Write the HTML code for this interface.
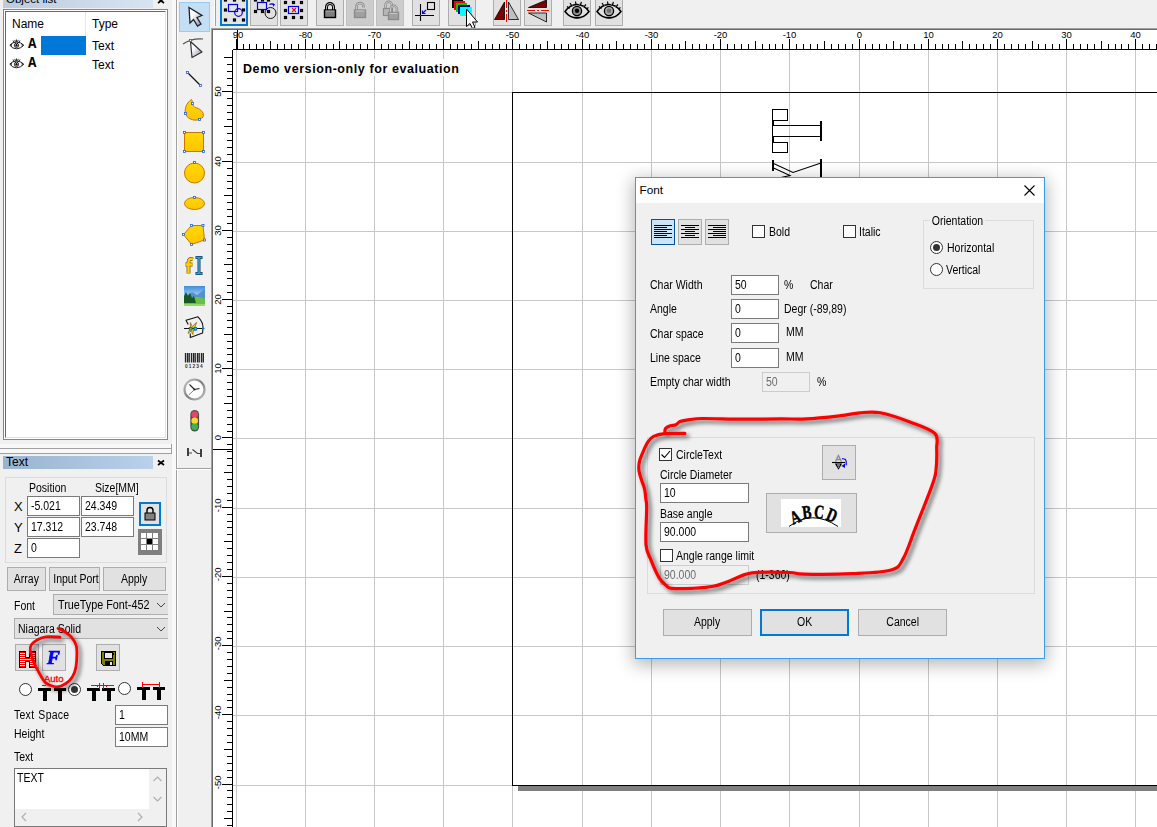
<!DOCTYPE html>
<html><head><meta charset="utf-8"><title>Font</title>
<style>
*{box-sizing:border-box;margin:0;padding:0}
html,body{width:1157px;height:827px;overflow:hidden;background:#f0f0f0;font-family:"Liberation Sans",sans-serif;font-size:11px;color:#000}
.a{position:absolute}
.t{position:absolute;white-space:nowrap;line-height:14px}
.inp{position:absolute;background:#fff;border:1px solid #7a7a7a;line-height:14px;padding:2px 0 0 3px;white-space:nowrap;overflow:hidden}
.inp.dis{background:#f0f0f0;border-color:#cccccc;color:#6d6d6d}
.btn{position:absolute;background:#e1e1e1;border:1px solid #adadad;text-align:center;white-space:nowrap}
.cb{position:absolute;width:13px;height:13px;background:#fff;border:1px solid #333}
.rb{position:absolute;width:13px;height:13px;background:#fff;border:1px solid #333;border-radius:50%}
.n{font-size:12px;transform:scaleX(.875);transform-origin:0 50%}
span.n{display:inline-block}
span.n.c{transform-origin:50% 50%}
.tb{position:absolute;top:-5px;height:31px;width:28px;background:#e1e1e1;border:1px solid #adadad}
</style></head><body>
<!-- LEFT PANEL: object list -->
<div class="a" style="left:3px;top:-6px;width:150px;height:14px;background:linear-gradient(90deg,#bccbdd,#d7e4f2)"></div>
<div class="t" style="left:6px;top:-8px;font-size:11.500px;color:#000">Object list</div>
<svg class="a" style="left:157px;top:-3px" width="8" height="8"><path d="M1 1.500l6 4.500m0-4.500l-6 4.500" stroke="#000" stroke-width="1.600" fill="none"/></svg>
<div class="a" style="left:3px;top:9px;width:165px;height:431px;border:1px solid #828790;background:#fff"></div>
<div class="a" style="left:5px;top:11px;width:161px;height:427px;border:1px solid #696969;border-right-color:#e3e3e3;border-bottom-color:#e3e3e3;background:#fff"></div>
<div class="a" style="left:85px;top:12px;width:1px;height:24px;background:#e5e5e5"></div>
<div class="t" style="left:12px;top:17px;font-size:12px">Name</div>
<div class="t" style="left:92px;top:17px;font-size:12px">Type</div>
<div class="a" style="left:41px;top:36px;width:45px;height:19px;background:#0078d7"></div>
<div class="t" style="left:92px;top:39px;font-size:12px">Text</div>
<div class="t" style="left:92px;top:58px;font-size:12px">Text</div>
<div class="t" style="left:28px;top:36px;font-size:14px;line-height:16px;font-weight:bold;font-family:'Liberation Mono',monospace">A</div>
<div class="t" style="left:28px;top:55px;font-size:14px;line-height:16px;font-weight:bold;font-family:'Liberation Mono',monospace">A</div>
<svg class="a" style="left:9px;top:39px" width="16" height="11" viewBox="0 0 16 11"><g fill="none" stroke="#000" stroke-width=".9"><path d="M.8 6.200Q3.500 3 7.500 3Q11.500 3 14.800 6.200Q11.500 9.800 7.500 9.800Q3.500 9.800 .8 6.200Z"/><path d="M2.500 7.500Q1.500 6 3 4.500M13 7.500Q14 6 12.500 4.500" stroke-width=".7"/><circle cx="7.500" cy="6.300" r="2.100"/><circle cx="7.500" cy="6.300" r=".8" fill="#000"/><path d="M4 1.500l1 1.800M7.500 .5v2.300M11 1.500l-1 1.800M5.800 .9l.6 2M9.200 .9l-.6 2" stroke-width=".8"/></g></svg>
<svg class="a" style="left:9px;top:58px" width="16" height="11" viewBox="0 0 16 11"><g fill="none" stroke="#000" stroke-width=".9"><path d="M.8 6.200Q3.500 3 7.500 3Q11.500 3 14.800 6.200Q11.500 9.800 7.500 9.800Q3.500 9.800 .8 6.200Z"/><path d="M2.500 7.500Q1.500 6 3 4.500M13 7.500Q14 6 12.500 4.500" stroke-width=".7"/><circle cx="7.500" cy="6.300" r="2.100"/><circle cx="7.500" cy="6.300" r=".8" fill="#000"/><path d="M4 1.500l1 1.800M7.500 .5v2.300M11 1.500l-1 1.800M5.800 .9l.6 2M9.200 .9l-.6 2" stroke-width=".8"/></g></svg>
<!-- splitter lines -->
<div class="a" style="left:0;top:444px;width:171px;height:4px;background:#f8f8f8"></div>
<div class="a" style="left:0;top:449px;width:171px;height:4px;background:#f8f8f8"></div>
<div class="a" style="left:0;top:448px;width:176px;height:1px;background:#a0a0a0"></div>
<div class="a" style="left:171px;top:444px;width:1px;height:10px;background:#a0a0a0"></div>
<div class="a" style="left:0;top:453px;width:172px;height:1px;background:#a0a0a0"></div>
<!-- Text panel -->
<div class="a" style="left:3px;top:456px;width:150px;height:13px;background:linear-gradient(90deg,#99b4d1,#b9d1ea)"></div>
<div class="t" style="left:6px;top:455px;font-size:12px">Text</div>
<svg class="a" style="left:157px;top:459px" width="8" height="8"><path d="M1 1.500l6 4.500m0-4.500l-6 4.500" stroke="#000" stroke-width="1.600" fill="none"/></svg>
<div class="a" style="left:5px;top:477px;width:162px;height:86px;border:1px solid #dcdcdc"></div>
<div class="t n" style="left:29px;top:481px">Position</div>
<div class="t n" style="left:95px;top:481px">Size[MM]</div>
<div class="t" style="left:14px;top:500px;font-size:13px">X</div>
<div class="t" style="left:14px;top:521px;font-size:13px">Y</div>
<div class="t" style="left:14px;top:542px;font-size:13px">Z</div>
<div class="inp" style="left:27px;top:496px;width:53px;height:20px"><span class="n">-5.021</span></div>
<div class="inp" style="left:81px;top:496px;width:53px;height:20px"><span class="n">24.349</span></div>
<div class="inp" style="left:27px;top:517px;width:53px;height:20px"><span class="n">17.312</span></div>
<div class="inp" style="left:81px;top:517px;width:53px;height:20px"><span class="n">23.748</span></div>
<div class="inp" style="left:27px;top:538px;width:53px;height:20px"><span class="n">0</span></div>
<div class="a" style="left:139px;top:502px;width:22px;height:24px;background:#e1e1e1;border:2px solid #0078d7"></div>
<svg class="a" style="left:144px;top:506px" width="12" height="15" viewBox="0 0 12 15"><path d="M3 7V4.5a3 3 0 0 1 6 0V7" fill="none" stroke="#000" stroke-width="1.4"/><rect x="1" y="7" width="10" height="7" fill="#808080" stroke="#000"/></svg>
<div class="a" style="left:138px;top:529px;width:24px;height:26px;background:#808080"></div>
<svg class="a" style="left:138px;top:529px" width="24" height="26"><g fill="#fff"><rect x="3" y="4" width="5" height="5"/><rect x="9" y="4" width="5" height="5"/><rect x="15" y="4" width="5" height="5"/><rect x="3" y="10" width="5" height="5"/><rect x="15" y="10" width="5" height="5"/><rect x="3" y="16" width="5" height="5"/><rect x="9" y="16" width="5" height="5"/><rect x="15" y="16" width="5" height="5"/></g><rect x="9" y="10" width="5" height="5" fill="#000"/></svg>
<div class="btn" style="left:7px;top:567px;width:39px;height:24px;line-height:23px"><span class="n c">Array</span></div>
<div class="btn" style="left:49px;top:567px;width:51px;height:24px;line-height:23px"><span class="n c">Input Port</span></div>
<div class="btn" style="left:103px;top:567px;width:63px;height:24px;line-height:23px"><span class="n c">Apply</span></div>
<div class="t n" style="left:14px;top:599px">Font</div>
<div class="a" style="left:53px;top:594px;width:115px;height:21px;background:#e1e1e1;border:1px solid #adadad;border-right:none"></div>
<div class="t n" style="left:58px;top:598px;transform:scaleX(.9)">TrueType Font-452</div>
<svg class="a" style="left:156px;top:602px" width="10" height="6"><path d="M1 1l4 4 4-4" fill="none" stroke="#444" stroke-width="1"/></svg>
<div class="a" style="left:14px;top:618px;width:154px;height:21px;background:#e1e1e1;border:1px solid #adadad;border-right:none"></div>
<div class="t n" style="left:18px;top:622px">Niagara Solid</div>
<svg class="a" style="left:156px;top:626px" width="10" height="6"><path d="M1 1l4 4 4-4" fill="none" stroke="#444" stroke-width="1"/></svg>
<div class="btn" style="left:15px;top:644px;width:24px;height:27px"></div>
<div class="btn" style="left:42px;top:644px;width:24px;height:27px"></div>
<div class="btn" style="left:96px;top:644px;width:24px;height:27px"></div>
<svg class="a" style="left:15px;top:644px" width="24" height="27" viewBox="15 644 24 27" shape-rendering="crispEdges"><defs><pattern id="hs" width="2" height="2" patternUnits="userSpaceOnUse"><rect width="2" height="1" fill="#ff0000"/><rect y="1" width="2" height="1" fill="#fff"/></pattern></defs>
<path d="M19.500 651.500H25.500V657.500H29.500V651.500H35.500V667.500H29.500V661.500H25.500V667.500H19.500Z" fill="url(#hs)" stroke="#000" stroke-width="1"/></svg>
<div class="t" style="left:47px;top:648px;font-size:18px;line-height:20px;font-weight:bold;font-style:italic;color:#0000ff;-webkit-text-stroke:.7px #0000ff;transform:scaleX(1.080);transform-origin:0 0;font-family:'Liberation Serif',serif">F</div>
<svg class="a" style="left:101px;top:651px" width="15" height="15" viewBox="0 0 15 15" shape-rendering="crispEdges"><path d="M.5.5H14.500V14.500H2.500L.5 12.500Z" fill="#808000" stroke="#000"/><rect x="3.500" y="1.500" width="8" height="6" fill="#e8e8e8" stroke="#000" stroke-width="1"/><rect x="12" y="2" width="1" height="2" fill="#000"/><rect x="4" y="10" width="8" height="4" fill="#000"/><rect x="9" y="11" width="2" height="3" fill="#e8e8e8"/></svg>
<div class="t" style="left:44px;top:672px;font-size:9.500px;color:#ff0000;-webkit-text-stroke:.3px #ff0000">Auto</div>
<div class="rb" style="left:19px;top:683px"></div>
<div class="rb" style="left:68px;top:683px"></div><div class="a" style="left:71px;top:686px;width:7px;height:7px;border-radius:50%;background:#333"></div>
<div class="rb" style="left:118px;top:682px"></div>
<svg class="a" style="left:30px;top:678px" width="140" height="26" viewBox="30 678 140 26" shape-rendering="crispEdges"><g fill="#000"><rect x="38" y="688" width="13" height="3"/><rect x="42.5" y="688" width="4" height="13"/><rect x="54" y="688" width="12" height="3"/><rect x="58" y="688" width="4" height="13"/><rect x="87" y="688" width="13" height="3"/><rect x="91.5" y="688" width="4" height="13"/><rect x="102" y="688" width="13" height="3"/><rect x="106.5" y="688" width="4" height="13"/><rect x="137" y="687" width="13" height="3"/><rect x="141.5" y="687" width="4" height="13"/><rect x="153" y="687" width="12" height="3"/><rect x="157" y="687" width="4" height="13"/></g>
<path d="M91 685.500H114M99.500 683V689M103.500 683V689M97 684.500v2M106 684.500v2M142.500 682V688M159.500 682V688M143 684.500H160M42 685.500h4M48 685.500h4" stroke="#ff0000" stroke-width="1" fill="none"/></svg>
<div class="t n" style="left:14px;top:708px;word-spacing:1px;letter-spacing:.3px">Text Space</div>
<div class="t n" style="left:14px;top:727px">Height</div>
<div class="t n" style="left:14px;top:750px">Text</div>
<div class="inp" style="left:115px;top:705px;width:53px;height:20px;padding-left:3px"><span class="n">1</span></div>
<div class="inp" style="left:115px;top:727px;width:53px;height:20px;padding-left:3px"><span class="n">10MM</span></div>
<div class="a" style="left:14px;top:768px;width:153px;height:59px;border:1px solid #7a7a7a;background:#f0f0f0"></div>
<div class="a" style="left:15px;top:769px;width:134px;height:40px;background:#fff"></div>
<div class="t n" style="left:17px;top:771px">TEXT</div>
<svg class="a" style="left:149px;top:769px" width="17" height="40"><path d="M4.500 12l4-4 4 4M4.500 28l4 4 4-4" fill="none" stroke="#b0b0b0" stroke-width="1.2"/></svg>
<svg class="a" style="left:15px;top:809px" width="134" height="17"><path d="M11 4l-4 4 4 4M123 4l4 4-4 4" fill="none" stroke="#b0b0b0" stroke-width="1.2"/></svg>
<!-- TOOL COLUMN -->
<div class="a" style="left:172px;top:0;width:4px;height:827px;background:#f9f9f9"></div>
<div class="a" style="left:176px;top:0;width:1px;height:469px;background:#a0a0a0"></div><div class="a" style="left:177px;top:0;width:1px;height:468px;background:#fff"></div><div class="a" style="left:176px;top:470px;width:1px;height:357px;background:#a0a0a0"></div><div class="a" style="left:177px;top:470px;width:1px;height:357px;background:#fff"></div>
<div class="a" style="left:176px;top:468px;width:35px;height:1px;background:#a0a0a0"></div><div class="a" style="left:177px;top:469px;width:34px;height:1px;background:#fff"></div>
<div class="a" style="left:179px;top:2px;width:31px;height:30px;background:#c4dff5;border:1px solid #99ccf3"></div>
<svg class="a" style="left:176px;top:0" width="36" height="470" viewBox="176 0 36 470">
<defs><linearGradient id="yg" x1="0" y1="0" x2="0" y2="1"><stop offset="0" stop-color="#ffd800"/><stop offset="1" stop-color="#ffc400"/></linearGradient>
<linearGradient id="gg" x1="0" y1="0" x2="1" y2="1"><stop offset="0" stop-color="#ffffff"/><stop offset=".35" stop-color="#ffffff"/><stop offset="1" stop-color="#8088a8"/></linearGradient></defs>
<!-- arrow -->
<path d="M189 7.500L202 15.500L197 17.500L201 24L197.500 26L193.500 19.500L190 23Z" fill="url(#gg)" stroke="#222" stroke-width="1.300" stroke-linejoin="miter"/>
<!-- node edit -->
<path d="M183 44Q192 38 203 39" fill="none" stroke="#555" stroke-width="1.200"/>
<path d="M190.500 41.500L202 52L192 57.500Z" fill="url(#gg)" stroke="#333" stroke-width="1.200" stroke-linejoin="round"/>
<rect x="189.500" y="39.500" width="2" height="2" fill="#fff" stroke="#2a5fd0" stroke-width=".8"/>
<!-- line -->
<path d="M187.500 72.500L200.500 85.500" stroke="#111" stroke-width="1.300"/>
<rect x="186.500" y="71.500" width="2" height="2" fill="#fff" stroke="#2a5fd0" stroke-width=".8"/><rect x="199.500" y="84.500" width="2" height="2" fill="#fff" stroke="#2a5fd0" stroke-width=".8"/>
<!-- curve -->
<path d="M191.500 99.500C186 103 183 111 187 116.500C191 121 199 121.500 203 117C205 112 199 108 195 107.500C192 106 193 101 191.500 99.500Z" fill="url(#yg)" stroke="#c87800" stroke-width="1"/>
<rect x="191.500" y="102.500" width="2" height="2" fill="#fff" stroke="#2a5fd0" stroke-width=".8"/><rect x="184.500" y="112.500" width="2" height="2" fill="#fff" stroke="#2a5fd0" stroke-width=".8"/><rect x="198.500" y="118.500" width="2" height="2" fill="#fff" stroke="#2a5fd0" stroke-width=".8"/>
<!-- rect -->
<rect x="184.500" y="132.500" width="19" height="19" fill="url(#yg)" stroke="#c87800"/>
<g fill="#fff" stroke="#2a5fd0" stroke-width=".8"><rect x="183.500" y="131.500" width="2" height="2"/><rect x="202.500" y="131.500" width="2" height="2"/><rect x="183.500" y="150.500" width="2" height="2"/><rect x="202.500" y="150.500" width="2" height="2"/></g>
<!-- circle -->
<circle cx="194.500" cy="173" r="10" fill="url(#yg)" stroke="#c87800"/><rect x="193.500" y="161.500" width="2" height="2" fill="#fff" stroke="#2a5fd0" stroke-width=".8"/>
<!-- ellipse -->
<ellipse cx="194.500" cy="203.500" rx="10" ry="6" fill="url(#yg)" stroke="#c87800"/><rect x="193.500" y="196.500" width="2" height="2" fill="#fff" stroke="#2a5fd0" stroke-width=".8"/>
<!-- polygon -->
<path d="M191.500 225.500H203L204.500 240L191.500 244.500L183.500 234.500Z" fill="url(#yg)" stroke="#c87800"/>
<g fill="#fff" stroke="#2a5fd0" stroke-width=".8"><rect x="190.500" y="224.500" width="2" height="2"/><rect x="202" y="224.500" width="2" height="2"/><rect x="203.500" y="239" width="2" height="2"/><rect x="190.500" y="243.500" width="2" height="2"/><rect x="182.500" y="233.500" width="2" height="2"/></g>
<!-- fI -->
<path d="M193 259.500Q188.500 257.500 188.500 262.500V273.500M185.500 264.500H192.500" fill="none" stroke="#7a5a00" stroke-width="3.800"/>
<path d="M193 259.500Q188.500 257.500 188.500 262.500V273.500M185.500 264.500H192.500" fill="none" stroke="#ffd000" stroke-width="2.400"/>
<path d="M199 257V274M195.500 257.500H202.500M195.500 273.500H202.500" fill="none" stroke="#104060" stroke-width="3"/>
<path d="M199 257V274M195.500 257.500H202.500M195.500 273.500H202.500" fill="none" stroke="#30a0d8" stroke-width="1.600"/>
<!-- image -->
<linearGradient id="sky" x1="0" y1="0" x2="0" y2="1"><stop offset="0" stop-color="#3c8ce0"/><stop offset=".7" stop-color="#d8ecf8"/></linearGradient>
<rect x="184" y="286" width="21" height="20" fill="url(#sky)"/><path d="M184 297L192 292L197 295L205 289V302H184Z" fill="#5890c8"/><path d="M184 300Q195 294 205 299V306H184Z" fill="#68c048"/><path d="M184 296L186 292L188 296L190 293L192 298L194 296L196 303H184Z" fill="#185828"/><rect x="184" y="304" width="21" height="2" fill="#98d868"/>
<!-- vector -->
<path d="M188.200 324.400L186 320.200L198 316.800Q203 322 203 327L202.600 333L190.300 337.500V333.500" fill="none" stroke="#111" stroke-width="1.100" stroke-linejoin="round"/>
<path d="M190.300 322.500L192.300 326.500L196.600 322.300L194.500 328.500L196 330L193.500 330.500L192.800 334.500L191 331L188 333.500L189.500 329.500L188.500 328L190.500 327Z" fill="#f8d000" stroke="#6a4a00" stroke-width=".6"/>
<path d="M184 328.500H202" stroke="#111" stroke-width="1"/><path d="M202 328.500H204.500" stroke="#0078d7" stroke-width="1.200"/>
<rect x="189" y="327" width="3.500" height="3.500" fill="#0078d7"/><rect x="193.500" y="327" width="3.500" height="3.500" fill="#0078d7"/><rect x="190.300" y="328.300" width="1" height="1" fill="#ffd800"/><rect x="194.800" y="328.300" width="1" height="1" fill="#ffd800"/>
<!-- barcode -->
<path d="M185.500 353v9.500M187.500 353v9.500M189.200 353v9.500M191.500 353v9.500M193.500 353v9.500M195.200 353v9.500M197.500 353v9.500M199.200 353v9.500M201.500 353v9.500M203.300 353v9.500" stroke="#222" stroke-width="1.300"/>
<text x="185" y="367.500" font-size="4.800" font-weight="bold" font-family="Liberation Sans" letter-spacing="1.100" fill="#333">01234</text>
<!-- clock -->
<linearGradient id="ck" x1="0" y1="0" x2="1" y2="1"><stop offset="0" stop-color="#c8c8c8"/><stop offset=".5" stop-color="#808080"/><stop offset="1" stop-color="#c0c0c0"/></linearGradient>
<circle cx="194.500" cy="389.500" r="10" fill="#fcfcfc" stroke="url(#ck)" stroke-width="2.200"/><path d="M194.500 389.500L189.500 384.500M194.500 389.500L199.500 388.500" stroke="#222" stroke-width="1.100"/><path d="M194.500 389.500L188.800 395" stroke="#e03030" stroke-width=".8"/><circle cx="194.500" cy="389.500" r="1" fill="#222"/>
<!-- traffic light -->
<rect x="190.300" y="410" width="8.800" height="21.500" rx="4.400" fill="#505050"/><circle cx="194.700" cy="414.600" r="3.300" fill="#e04868"/><circle cx="194.700" cy="420.700" r="3.300" fill="#f8d830"/><circle cx="194.700" cy="426.800" r="3.300" fill="#40b050"/>
<!-- measure -->
<path d="M188 448v8M201 449v8" stroke="#404040" stroke-width="2" fill="none"/><path d="M188 453h4M192.500 449.500L197.500 453.500H201" stroke="#404040" stroke-width="1.200" fill="none"/>
</svg>
<!-- TOP TOOLBAR -->
<div class="a" style="left:214px;top:0;width:1px;height:26px;background:#fff"></div>
<div class="a" style="left:215px;top:0;width:1px;height:26px;background:#a0a0a0"></div>
<div class="tb" style="left:220px;border:2px solid #0078d7;background:#e4e4e4"></div>
<div class="tb" style="left:250px"></div>
<div class="tb" style="left:280px"></div>
<div class="tb" style="left:316px"></div>
<div class="tb" style="left:346px;background:#cccccc;border-color:#c0c0c0"></div>
<div class="tb" style="left:376px;background:#cccccc;border-color:#c0c0c0"></div>
<div class="tb" style="left:412px"></div>
<div class="tb" style="left:448px"></div>
<div class="tb" style="left:493px"></div>
<div class="tb" style="left:524px"></div>
<div class="tb" style="left:563px"></div>
<div class="tb" style="left:595px"></div>
<svg class="a" style="left:212px;top:0" width="420" height="28" viewBox="212 0 420 28">
<!-- select group 1 -->
<g fill="#ddd" stroke="#000" stroke-width="1.200"><rect x="224.5" y="-1" width="2" height="2"/><rect x="233.5" y="-1" width="2" height="2"/><rect x="242.5" y="-1" width="2" height="2"/><rect x="224.5" y="9" width="2" height="2"/><rect x="242.5" y="9" width="2" height="2"/><rect x="224.5" y="19" width="2" height="2"/><rect x="233.5" y="19" width="2" height="2"/><rect x="242.5" y="19" width="2" height="2"/></g>
<rect x="228.500" y="4.500" width="9" height="7" fill="none" stroke="#0000e0" stroke-width="1.200"/><circle cx="238.500" cy="12.500" r="3.800" fill="none" stroke="#0000e0" stroke-width="1.200"/>
<!-- select group 2 -->
<g fill="#ddd" stroke="#000" stroke-width="1.200"><rect x="254.5" y="-1" width="2" height="2"/><rect x="261.5" y="-1" width="2" height="2"/><rect x="267.5" y="-1" width="2" height="2"/><rect x="254.5" y="10.5" width="2" height="2"/><rect x="261.5" y="10.5" width="2" height="2"/><rect x="267.5" y="10.5" width="2" height="2"/></g>
<rect x="257.500" y="2.500" width="9" height="7" fill="none" stroke="#0000e0" stroke-width="1.200"/><circle cx="270.500" cy="13" r="5.500" fill="none" stroke="#111" stroke-width="1"/><path d="M269.500 4.500q2.500-1.500 4.500 .5" fill="none" stroke="#0000e0" stroke-width="1.200"/><path d="M272.500 3.500l2.500 .5-1.500 3z" fill="#0000e0"/>
<!-- select group 3 -->
<g fill="#ddd" stroke="#000" stroke-width="1.200"><rect x="284.5" y="1.5" width="2" height="2"/><rect x="292.5" y="1.5" width="2" height="2"/><rect x="300.5" y="1.5" width="2" height="2"/><rect x="284.5" y="9.5" width="2" height="2"/><rect x="300.5" y="9.5" width="2" height="2"/><rect x="284.5" y="16.5" width="2" height="2"/><rect x="292.5" y="16.5" width="2" height="2"/><rect x="300.5" y="16.5" width="2" height="2"/></g>
<rect x="288.500" y="6.500" width="10" height="7" fill="#d8f0f0" stroke="#0000e0" stroke-width="1.200"/><path d="M292 8l4 4m0-4l-4 4" stroke="#ff0000" stroke-width="1.100"/>
<!-- locks -->
<path d="M326.500 10V7a3.500 3.500 0 0 1 7 0V10" fill="none" stroke="#000" stroke-width="3"/><path d="M326.500 10V7a3.500 3.500 0 0 1 7 0V10" fill="none" stroke="#d0d0d0" stroke-width=".9"/><rect x="324.500" y="10" width="11" height="7.500" fill="#808080" stroke="#000" stroke-width="1.400"/><path d="M325.500 11h9" stroke="#b0b0b0" stroke-width="1"/>
<path d="M356.500 10V6.500a3.500 3.500 0 0 1 7 0V7.500" fill="none" stroke="#8c8c8c" stroke-width="2.600"/><path d="M356.500 10V6.500a3.500 3.500 0 0 1 7 0V7.500" fill="none" stroke="#d8d8d8" stroke-width=".8"/><rect x="354.500" y="10" width="11" height="7.500" fill="#a0a0a0" stroke="#8c8c8c" stroke-width="1.400"/><path d="M355.500 11h9" stroke="#c8c8c8" stroke-width="1"/>
<path d="M385.500 8V5a3.200 3.200 0 0 1 6.400 0V6" fill="none" stroke="#8c8c8c" stroke-width="2.400"/><path d="M385.500 8V5a3.200 3.200 0 0 1 6.400 0V6" fill="none" stroke="#d8d8d8" stroke-width=".8"/><rect x="383.500" y="8.500" width="9" height="7" fill="#b8b8b8" stroke="#8c8c8c" stroke-width="1.200"/>
<path d="M390.500 12V9a3.200 3.200 0 0 1 6.400 0V12" fill="none" stroke="#8c8c8c" stroke-width="2.400"/><path d="M390.500 12V9a3.200 3.200 0 0 1 6.400 0V12" fill="none" stroke="#d8d8d8" stroke-width=".8"/><rect x="388.500" y="12.500" width="10" height="7" fill="#a0a0a0" stroke="#8c8c8c" stroke-width="1.400"/><path d="M389.500 13.500h8" stroke="#c8c8c8" stroke-width="1"/>
<!-- origin -->
<path d="M420.500 4v17M415 15.500h19" stroke="#000" stroke-width="1.100"/><rect x="427.500" y="2.500" width="7" height="7" fill="none" stroke="#000" stroke-width="1.100"/><path d="M426 10l-3.500 3.500m0-3v3h3" stroke="#0000ff" stroke-width="1.200" fill="none"/><rect x="420" y="15" width="1" height="1" fill="#ff0000"/>
<!-- colors -->
<rect x="452" y="-2" width="11" height="10" fill="#000"/><rect x="454" y="1" width="11" height="9" fill="#ff0000"/><rect x="456" y="3" width="11" height="9" fill="#00c800"/><rect x="458" y="5" width="12" height="9" fill="#000090"/><rect x="460" y="7" width="12" height="9" fill="#00ffff"/>
<!-- mirror h -->
<path d="M494.500 19.500h10V2Z" fill="#7a0000" stroke="#000" stroke-width=".8"/><path d="M508.500 2v17.500h10Z" fill="#c0c0c0" stroke="#000" stroke-width=".8"/><path d="M506.500 0v22" stroke="#ff0000" stroke-width="1" stroke-dasharray="8 2 2 2" shape-rendering="crispEdges"/>
<!-- mirror v -->
<path d="M546.500 0v7.500h-18Z" fill="#7a0000" stroke="#000" stroke-width=".8"/><path d="M528.500 13h18V22Z" fill="#c0c0c0" stroke="#000" stroke-width=".8"/><path d="M527 10.500h22" stroke="#ff0000" stroke-width="1" stroke-dasharray="8 2 2 2" shape-rendering="crispEdges"/>
<!-- eyes -->
<g><path d="M565 11.500Q570 4.500 577 4.500Q584 4.500 589 11.500Q584 18 577 18Q570 18 565 11.500Z" fill="none" stroke="#000" stroke-width="1.500"/><circle cx="577" cy="11" r="4.600" fill="#909090" stroke="#000" stroke-width="1.300"/><circle cx="577" cy="10.800" r="2.200" fill="#000"/><path d="M574.500 17.500h5" stroke="#000" stroke-width="1.500"/><path d="M567 6.500l2.500 2M570 3l2 3M575.500 1.500l.5 3.500M581.500 2l-1.500 3.500M586 4.500l-2.500 2.500M588.500 7.500l-2 1.500" stroke="#000" stroke-width="1.200" fill="none"/><path d="M572 4.500l.8 1.200M579.800 3.500l-.6 1.500M584.500 5.500l-1 1" stroke="#20a0a0" stroke-width="1" fill="none"/></g>
<g transform="translate(32,0)"><path d="M565 11.500Q570 4.500 577 4.500Q584 4.500 589 11.500Q584 18 577 18Q570 18 565 11.500Z" fill="none" stroke="#000" stroke-width="1.500"/><circle cx="577" cy="11" r="4.600" fill="#a8a8a8" stroke="#000" stroke-width="1.300"/><circle cx="577" cy="10.800" r="2.200" fill="#707070"/><path d="M574.500 17.500h5" stroke="#000" stroke-width="1.500"/><path d="M567 6.500l2.500 2M570 3l2 3M575.500 1.500l.5 3.500M581.500 2l-1.500 3.500M586 4.500l-2.500 2.500M588.500 7.500l-2 1.500" stroke="#000" stroke-width="1.200" fill="none"/><path d="M572 4.500l.8 1.200M579.800 3.500l-.6 1.500M584.500 5.500l-1 1" stroke="#20a0a0" stroke-width="1" fill="none"/></g>
<!-- mouse cursor -->
<path d="M466.500 9V26.500L470 23.500L472.500 28.500L475 27.500L472.500 22H477.500Z" fill="#fff" stroke="#000" stroke-width="1"/>
</svg>
<!-- CANVAS -->
<div class="a" style="left:211px;top:28px;width:946px;height:799px;background:#fff;border-top:1px solid #a0a0a0;border-left:1px solid #a0a0a0"></div>
<div class="a" style="left:212px;top:29px;width:945px;height:798px;background:#fff;border-top:1px solid #696969;border-left:1px solid #696969"></div>
<svg class="a" style="left:212px;top:28px" width="945" height="799" viewBox="212 28 945 799" shape-rendering="crispEdges">
<path d="M236.5 50V827M305.5 50V827M374.5 50V827M443.5 50V827M512.5 50V827M582.5 50V827M651.5 50V827M720.5 50V827M789.5 50V827M859.5 50V827M928.5 50V827M997.5 50V827M1066.5 50V827M1135.5 50V827M233 785.5H1157M233 715.5H1157M233 646.5H1157M233 577.5H1157M233 508.5H1157M233 438.5H1157M233 369.5H1157M233 300.5H1157M233 231.5H1157M233 162.5H1157M233 92.5H1157" stroke="#c8c8c8" stroke-width="1" fill="none"/>
<path d="M236.5 39V50M243.5 44V50M249.5 44V50M256.5 44V50M263.5 44V50M270.5 41V50M277.5 44V50M284.5 44V50M291.5 44V50M298.5 44V50M305.5 39V50M312.5 44V50M319.5 44V50M326.5 44V50M333.5 44V50M339.5 41V50M346.5 44V50M353.5 44V50M360.5 44V50M367.5 44V50M374.5 39V50M381.5 44V50M388.5 44V50M395.5 44V50M402.5 44V50M409.5 41V50M416.5 44V50M422.5 44V50M429.5 44V50M436.5 44V50M443.5 39V50M450.5 44V50M457.5 44V50M464.5 44V50M471.5 44V50M478.5 41V50M485.5 44V50M492.5 44V50M499.5 44V50M506.5 44V50M512.5 39V50M519.5 44V50M526.5 44V50M533.5 44V50M540.5 44V50M547.5 41V50M554.5 44V50M561.5 44V50M568.5 44V50M575.5 44V50M582.5 39V50M589.5 44V50M596.5 44V50M602.5 44V50M609.5 44V50M616.5 41V50M623.5 44V50M630.5 44V50M637.5 44V50M644.5 44V50M651.5 39V50M658.5 44V50M665.5 44V50M672.5 44V50M679.5 44V50M685.5 41V50M692.5 44V50M699.5 44V50M706.5 44V50M713.5 44V50M720.5 39V50M727.5 44V50M734.5 44V50M741.5 44V50M748.5 44V50M755.5 41V50M762.5 44V50M769.5 44V50M775.5 44V50M782.5 44V50M789.5 39V50M796.5 44V50M803.5 44V50M810.5 44V50M817.5 44V50M824.5 41V50M831.5 44V50M838.5 44V50M845.5 44V50M852.5 44V50M859.5 39V50M865.5 44V50M872.5 44V50M879.5 44V50M886.5 44V50M893.5 41V50M900.5 44V50M907.5 44V50M914.5 44V50M921.5 44V50M928.5 39V50M935.5 44V50M942.5 44V50M948.5 44V50M955.5 44V50M962.5 41V50M969.5 44V50M976.5 44V50M983.5 44V50M990.5 44V50M997.5 39V50M1004.5 44V50M1011.5 44V50M1018.5 44V50M1025.5 44V50M1032.5 41V50M1038.5 44V50M1045.5 44V50M1052.5 44V50M1059.5 44V50M1066.5 39V50M1073.5 44V50M1080.5 44V50M1087.5 44V50M1094.5 44V50M1101.5 41V50M1108.5 44V50M1115.5 44V50M1121.5 44V50M1128.5 44V50M1135.5 39V50M1142.5 44V50M1149.5 44V50M1156.5 44V50M227 825.5H233M224 818.5H233M227 811.5H233M227 804.5H233M227 797.5H233M227 790.5H233M222 784.5H233M227 777.5H233M227 770.5H233M227 763.5H233M227 756.5H233M224 749.5H233M227 742.5H233M227 735.5H233M227 728.5H233M227 721.5H233M222 714.5H233M227 707.5H233M227 700.5H233M227 694.5H233M227 687.5H233M224 680.5H233M227 673.5H233M227 666.5H233M227 659.5H233M227 652.5H233M222 645.5H233M227 638.5H233M227 631.5H233M227 624.5H233M227 617.5H233M224 611.5H233M227 604.5H233M227 597.5H233M227 590.5H233M227 583.5H233M222 576.5H233M227 569.5H233M227 562.5H233M227 555.5H233M227 548.5H233M224 541.5H233M227 534.5H233M227 527.5H233M227 521.5H233M227 514.5H233M222 507.5H233M227 500.5H233M227 493.5H233M227 486.5H233M227 479.5H233M224 472.5H233M227 465.5H233M227 458.5H233M227 451.5H233M227 444.5H233M222 437.5H233M227 431.5H233M227 424.5H233M227 417.5H233M227 410.5H233M224 403.5H233M227 396.5H233M227 389.5H233M227 382.5H233M227 375.5H233M222 368.5H233M227 361.5H233M227 354.5H233M227 348.5H233M227 341.5H233M224 334.5H233M227 327.5H233M227 320.5H233M227 313.5H233M227 306.5H233M222 299.5H233M227 292.5H233M227 285.5H233M227 278.5H233M227 271.5H233M224 264.5H233M227 258.5H233M227 251.5H233M227 244.5H233M227 237.5H233M222 230.5H233M227 223.5H233M227 216.5H233M227 209.5H233M227 202.5H233M224 195.5H233M227 188.5H233M227 181.5H233M227 175.5H233M227 168.5H233M222 161.5H233M227 154.5H233M227 147.5H233M227 140.5H233M227 133.5H233M224 126.5H233M227 119.5H233M227 112.5H233M227 105.5H233M227 98.5H233M222 91.5H233M227 85.5H233M227 78.5H233M227 71.5H233M227 64.5H233M224 57.5H233M233 49.5H1157M232.5 50V827" stroke="#000" stroke-width="1" fill="none"/>
<path d="M237.500 30V50" stroke="#000" stroke-width="1" fill="none"/><path d="M213 449.500H233" stroke="#000" stroke-width="1" fill="none"/>
<rect x="518" y="786" width="640" height="5" fill="#808080"/>
<path d="M1157 92.500H512.500V785.500H1157" stroke="#000" stroke-width="1" fill="none"/>
</svg>
<svg class="a" style="left:212px;top:28px" width="945" height="799" viewBox="212 28 945 799" font-family="Liberation Sans" font-size="9.500" fill="#000"><defs><clipPath id="rc"><rect x="233" y="30" width="924" height="20"/></clipPath></defs>
<text x="236.5" y="37.500" text-anchor="middle" clip-path="url(#rc)">-90</text>
<text x="305.5" y="37.500" text-anchor="middle" clip-path="url(#rc)">-80</text>
<text x="374.5" y="37.500" text-anchor="middle" clip-path="url(#rc)">-70</text>
<text x="443.5" y="37.500" text-anchor="middle" clip-path="url(#rc)">-60</text>
<text x="512.5" y="37.500" text-anchor="middle" clip-path="url(#rc)">-50</text>
<text x="582.5" y="37.500" text-anchor="middle" clip-path="url(#rc)">-40</text>
<text x="651.5" y="37.500" text-anchor="middle" clip-path="url(#rc)">-30</text>
<text x="720.5" y="37.500" text-anchor="middle" clip-path="url(#rc)">-20</text>
<text x="789.5" y="37.500" text-anchor="middle" clip-path="url(#rc)">-10</text>
<text x="859.5" y="37.500" text-anchor="middle" clip-path="url(#rc)">0</text>
<text x="928.5" y="37.500" text-anchor="middle" clip-path="url(#rc)">10</text>
<text x="997.5" y="37.500" text-anchor="middle" clip-path="url(#rc)">20</text>
<text x="1066.5" y="37.500" text-anchor="middle" clip-path="url(#rc)">30</text>
<text x="1135.5" y="37.500" text-anchor="middle" clip-path="url(#rc)">40</text>
<text transform="translate(221 782.3) rotate(-90)" text-anchor="middle">-50</text>
<text transform="translate(221 712.3) rotate(-90)" text-anchor="middle">-40</text>
<text transform="translate(221 643.3) rotate(-90)" text-anchor="middle">-30</text>
<text transform="translate(221 574.3) rotate(-90)" text-anchor="middle">-20</text>
<text transform="translate(221 505.3) rotate(-90)" text-anchor="middle">-10</text>
<text transform="translate(221 437.5) rotate(-90)" text-anchor="middle">0</text>
<text transform="translate(221 368.5) rotate(-90)" text-anchor="middle">10</text>
<text transform="translate(221 299.5) rotate(-90)" text-anchor="middle">20</text>
<text transform="translate(221 230.5) rotate(-90)" text-anchor="middle">30</text>
<text transform="translate(221 161.5) rotate(-90)" text-anchor="middle">40</text>
<text transform="translate(221 91.5) rotate(-90)" text-anchor="middle">50</text>
<rect x="243" y="59" width="217" height="17" fill="#fff"/>
<text x="243" y="72.500" font-size="12.500" font-weight="bold" letter-spacing="0.580">Demo version-only for evaluation</text>
<g fill="none" stroke="#000" stroke-width="1" shape-rendering="crispEdges">
<path d="M772.500 109.500H787.500V120.500H772.500M772.500 125.500H821M772.500 136.500H821M772.500 142.500H787.500V152.500H772.500M772.500 109V153"/>
<path d="M772.500 120V126M772.500 136V143M821 121V141M821 159V177M772.500 160V171" stroke-width="2"/>
</g><g fill="none" stroke="#000" stroke-width="1.100">
<path d="M772.500 163L793 172.500L821 163M772.500 167.500L790 175.500L781 177.500"/>
</g>
</svg>
<!-- DIALOG -->
<div class="a" style="left:635px;top:177px;width:410px;height:482px;background:#f0f0f0;border:1px solid #369fec;box-shadow:0 4px 16px 2px rgba(0,0,0,.28)"></div>
<div class="a" style="left:636px;top:178px;width:408px;height:25px;background:#fff"></div>
<div class="t" style="left:639.500px;top:183px;font-size:11.800px">Font</div>
<svg class="a" style="left:1023px;top:184px" width="13" height="13"><path d="M1.500 1.500l10 10m0-10l-10 10" stroke="#000" stroke-width="1.100" fill="none"/></svg>
<!-- align buttons -->
<div class="btn" style="left:651px;top:219px;width:24px;height:26px;background:#cce4f7;border-color:#005499"></div>
<div class="btn" style="left:678px;top:219px;width:24px;height:26px"></div>
<div class="btn" style="left:705px;top:219px;width:24px;height:26px"></div>
<svg class="a" style="left:651px;top:219px" width="80" height="26" shape-rendering="crispEdges"><path d="M3 6.500h18M3 8.500h13M3 10.500h18M3 12.500h13M3 14.500h18M3 16.500h13M3 18.500h18  M30 6.500h18M34 8.500h10M30 10.500h18M34 12.500h10M30 14.500h18M34 16.500h10M30 18.500h18  M57 6.500h18M62 8.500h13M57 10.500h18M62 12.500h13M57 14.500h18M62 16.500h13M57 18.500h18" stroke="#000" stroke-width="1"/></svg>
<div class="cb" style="left:752px;top:225px"></div><div class="t n" style="left:769px;top:225px">Bold</div>
<div class="cb" style="left:843px;top:225px"></div><div class="t n" style="left:859px;top:225px">Italic</div>
<!-- orientation -->
<div class="a" style="left:923px;top:220px;width:111px;height:69px;border:1px solid #dcdcdc"></div>
<div class="t n" style="left:930px;top:214px;background:#f0f0f0;padding:0 2px">Orientation</div>
<div class="rb" style="left:930px;top:241px"></div><div class="a" style="left:933px;top:244px;width:7px;height:7px;border-radius:50%;background:#333"></div>
<div class="t n" style="left:947px;top:241px">Horizontal</div>
<div class="rb" style="left:930px;top:263px"></div>
<div class="t n" style="left:946px;top:263px">Vertical</div>
<!-- fields -->
<div class="t n" style="left:650px;top:278px">Char Width</div>
<div class="t n" style="left:650px;top:302px">Angle</div>
<div class="t n" style="left:650px;top:327px">Char space</div>
<div class="t n" style="left:650px;top:351px">Line space</div>
<div class="t n" style="left:650px;top:375px">Empty char width</div>
<div class="inp" style="left:731px;top:275px;width:48px;height:20px"><span class="n">50</span></div>
<div class="inp" style="left:731px;top:299px;width:48px;height:20px"><span class="n">0</span></div>
<div class="inp" style="left:731px;top:323px;width:48px;height:20px"><span class="n">0</span></div>
<div class="inp" style="left:731px;top:348px;width:48px;height:20px"><span class="n">0</span></div>
<div class="inp dis" style="left:762px;top:372px;width:48px;height:20px"><span class="n">50</span></div>
<div class="t n" style="left:784px;top:278px">%</div><div class="t n" style="left:810px;top:278px">Char</div>
<div class="t n" style="left:784px;top:302px">Degr (-89,89)</div>
<div class="t n" style="left:786px;top:325px">MM</div>
<div class="t n" style="left:786px;top:350px">MM</div>
<div class="t n" style="left:817px;top:375px">%</div>
<!-- circle group -->
<div class="a" style="left:647px;top:437px;width:388px;height:157px;border:1px solid #dcdcdc"></div>
<div class="cb" style="left:659px;top:448px"></div>
<svg class="a" style="left:659px;top:448px" width="13" height="13"><path d="M2.500 6.500l3 3 5.500-6.500" stroke="#000" stroke-width="1.100" fill="none"/></svg>
<div class="t n" style="left:676px;top:448px">CircleText</div>
<div class="t n" style="left:660px;top:468px">Circle Diameter</div>
<div class="inp" style="left:660px;top:483px;width:89px;height:20px"><span class="n">10</span></div>
<div class="t n" style="left:660px;top:507px">Base angle</div>
<div class="inp" style="left:660px;top:522px;width:89px;height:20px"><span class="n">90.000</span></div>
<div class="cb" style="left:660px;top:549px"></div>
<div class="t n" style="left:676px;top:549px">Angle range limit</div>
<div class="inp dis" style="left:660px;top:565px;width:89px;height:20px"><span class="n">90.000</span></div>
<div class="t n" style="left:756px;top:568px">(1-360)</div>
<div class="btn" style="left:822px;top:445px;width:34px;height:35px"></div>
<svg class="a" style="left:830px;top:453px" width="20" height="20"><path d="M5.500 8.500L8.400 2.500L11.500 8.500M6.500 6.500h4" fill="none" stroke="#8a8a8a" stroke-width="1.300"/><path d="M2 9.500h13" stroke="#000" stroke-width="1.100"/><path d="M4.800 10.500h7.400L8.500 16.800Z" fill="#000"/><path d="M7 12h3M7.800 14h1.500" stroke="#e8e8e8" stroke-width="1"/><path d="M12 5.800q4-.5 4.200 3v3.500" fill="none" stroke="#0000ff" stroke-width="1.200"/><path d="M11.500 13l3.500-2.500v4.500z" fill="#0000ff"/></svg>
<div class="btn" style="left:766px;top:493px;width:91px;height:40px"></div>
<div class="a" style="left:781px;top:499px;width:60px;height:28px;background:#fff"></div>
<svg class="a" style="left:781px;top:499px" width="60" height="28" font-family="Liberation Serif" font-weight="bold" font-size="19" fill="#000" stroke="#000" stroke-width=".5" text-anchor="middle">
<path d="M8 27.500Q31 10 57 27.500" fill="none" stroke="#000" stroke-width="1"/>
<text transform="translate(16.500 24) rotate(-22) scale(.72 1)">A</text><text transform="translate(26.500 19.500) rotate(-7) scale(.72 1)">B</text><text transform="translate(37.500 19) rotate(7) scale(.72 1)">C</text><text transform="translate(48.500 22) rotate(22) scale(.72 1)">D</text></svg>
<!-- buttons -->
<div class="btn" style="left:663px;top:609px;width:89px;height:27px;line-height:25px"><span class="n c">Apply</span></div>
<div class="btn" style="left:760px;top:609px;width:89px;height:27px;line-height:23px;border:2px solid #0078d7"><span class="n c">OK</span></div>
<div class="btn" style="left:858px;top:609px;width:89px;height:27px;line-height:25px"><span class="n c">Cancel</span></div>
<!-- RED ANNOTATIONS -->
<svg class="a" style="left:0;top:0" width="1157" height="827" fill="none" stroke="#ff0000" stroke-width="3.200" stroke-linecap="round" stroke-linejoin="round">
<defs><filter id="ds" x="-5%" y="-5%" width="112%" height="112%"><feGaussianBlur in="SourceAlpha" stdDeviation="2"/><feOffset dx="3" dy="3"/><feComponentTransfer><feFuncA type="linear" slope="0.6"/></feComponentTransfer><feMerge><feMergeNode/><feMergeNode in="SourceGraphic"/></feMerge></filter></defs>
<g filter="url(#ds)">
<path d="M684.9 433.4C681.5 433.4 670.0 433.1 664.8 433.6C659.6 434.1 656.4 435.0 653.6 436.4C650.8 437.8 649.8 439.2 648.1 441.7C646.4 444.2 644.6 448.2 643.2 451.5C641.8 454.8 640.2 458.0 639.5 461.2C638.8 464.4 638.6 467.6 639.0 470.9C639.4 474.1 640.9 477.7 641.8 480.7C642.7 483.7 643.9 485.8 644.6 489.0C645.3 492.2 645.6 496.9 646.0 500.1C646.4 503.3 646.7 500.9 646.7 508.3C646.7 515.7 645.3 535.9 646.0 544.5C646.7 553.1 648.7 554.2 650.9 559.8C653.1 565.4 656.7 573.6 659.2 577.9C661.8 582.2 664.1 583.8 666.2 585.5C668.3 587.2 667.3 587.8 671.7 588.3C676.1 588.8 685.7 588.6 692.6 588.3C699.5 587.9 707.1 587.5 713.4 586.2C719.6 584.9 724.8 582.7 730.1 580.7C735.4 578.7 740.8 575.8 745.4 574.4C750.0 573.0 750.6 572.6 758.0 572.3C765.4 572.0 782.3 572.2 790.0 572.5C797.7 572.8 793.8 573.9 804.2 574.1C814.6 574.3 838.1 574.3 852.6 573.6C867.1 572.9 882.8 572.5 891.2 570.0C899.7 567.5 899.3 565.4 903.3 558.4C907.3 551.4 910.5 540.5 915.4 528.2C920.2 515.9 929.0 494.3 932.4 484.6C935.8 474.9 935.3 476.1 936.0 470.1C936.7 464.1 936.9 454.5 936.7 448.4C936.5 442.3 939.1 437.8 934.8 433.4C930.4 429.0 919.7 425.6 910.6 422.2C901.5 418.8 888.9 414.4 880.4 412.8C871.9 411.2 866.4 412.3 859.8 412.8C853.1 413.3 849.4 414.7 840.5 415.7C831.6 416.7 816.7 418.4 806.6 418.9C796.5 419.4 790.9 418.8 780.0 418.9C769.1 418.9 754.2 419.3 741.3 419.2C728.3 419.1 710.9 418.4 702.3 418.5C693.7 418.6 693.5 419.2 689.8 419.7C686.1 420.2 682.3 420.8 680.0 421.6C677.7 422.5 677.5 424.1 675.9 424.8C674.3 425.5 672.0 425.1 670.3 425.7C668.6 426.3 666.4 427.2 665.5 428.5C664.6 429.8 664.9 432.6 664.8 433.4"/>
<path d="M60.1 637.1C57.7 637.0 49.5 636.4 45.7 636.8C41.9 637.2 39.9 638.4 37.5 639.7C35.1 641.0 32.5 642.9 31.3 644.8C30.1 646.7 30.0 648.2 30.3 651.0C30.6 653.8 31.9 657.5 33.4 661.3C34.9 665.1 37.5 670.0 39.5 673.6C41.5 677.2 43.3 680.8 45.7 682.9C48.1 685.0 51.3 686.0 53.9 686.5C56.5 687.0 58.5 687.0 61.1 686.0C63.7 685.0 67.2 683.0 69.4 680.8C71.6 678.6 73.3 675.9 74.5 672.6C75.7 669.4 76.3 665.8 76.6 661.3C76.9 656.8 77.2 649.8 76.3 645.8C75.4 641.8 73.4 639.5 71.4 637.1C69.4 634.7 66.4 633.0 64.2 631.5C62.0 630.0 59.0 628.9 58.0 628.4" stroke-width="2.800"/>
</g></svg>
</body></html>
